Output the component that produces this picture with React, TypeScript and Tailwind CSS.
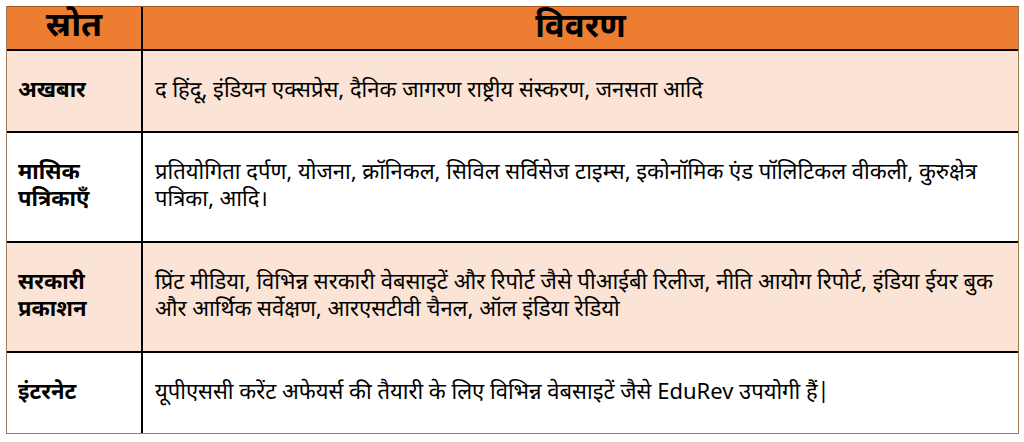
const font = { fontFamily: '"Noto Sans Devanagari", "Nirmala UI", "Mangal", "Noto Sans", sans-serif' };

const rows: { source: string[]; lines: string[]; h: string; bg: string }[] = [
  {
    source: ['अखबार'],
    lines: ['द हिंदू, इंडियन एक्सप्रेस, दैनिक जागरण राष्ट्रीय संस्करण, जनसता आदि'],
    h: 'h-[80px]',
    bg: 'bg-[#fbe4d5]',
  },
  {
    source: ['मासिक', 'पत्रिकाएँ'],
    lines: [
      'प्रतियोगिता दर्पण, योजना, क्रॉनिकल, सिविल सर्विसेज टाइम्स, इकोनॉमिक एंड पॉलिटिकल वीकली, कुरुक्षेत्र',
      'पत्रिका, आदि।',
    ],
    h: 'h-[108px]',
    bg: 'bg-white',
  },
  {
    source: ['सरकारी', 'प्रकाशन'],
    lines: [
      'प्रिंट मीडिया, विभिन्न सरकारी वेबसाइटें और रिपोर्ट जैसे पीआईबी रिलीज, नीति आयोग रिपोर्ट, इंडिया ईयर बुक',
      'और आर्थिक सर्वेक्षण, आरएसटीवी चैनल, ऑल इंडिया रेडियो',
    ],
    h: 'h-[108px]',
    bg: 'bg-[#fbe4d5]',
  },
  {
    source: ['इंटरनेट'],
    lines: ['यूपीएससी करेंट अफेयर्स की तैयारी के लिए विभिन्न वेबसाइटें जैसे EduRev उपयोगी हैं|'],
    h: 'h-[80px]',
    bg: 'bg-white',
  },
];

export default function App() {
  return (
    <div className="w-[1024px] h-[442px] bg-white pt-[6px] pl-[6px] text-black" style={font}>
      <div className="w-[1013px] border border-[#9b7b52] border-t-[#a8521c]">
        {/* header */}
        <div className="flex h-[44px] bg-[#ed7d31] border-b-2 border-black">
          <div className="w-[136px] border-r-2 border-black flex items-center justify-center text-[34px] font-bold leading-none">
            स्रोत
          </div>
          <div className="flex-1 flex items-center justify-center text-[33px] font-bold leading-none">
            विवरण
          </div>
        </div>

        {rows.map((r, i) => (
          <div
            key={i}
            className={`flex ${r.h} ${r.bg} ${i < rows.length - 1 ? 'border-b-2 border-black box-content' : ''}`}
          >
            <div className="w-[136px] border-r-2 border-black flex flex-col justify-center pl-[11px] text-[22px] font-bold leading-[27px]">
              {r.source.map((s) => (
                <span key={s}>{s}</span>
              ))}
            </div>
            <div className="flex-1 flex flex-col justify-center pl-[12px] text-[22px] leading-[27px]">
              {r.lines.map((l) => (
                <span key={l} className="whitespace-nowrap">
                  {l}
                </span>
              ))}
            </div>
          </div>
        ))}
      </div>
    </div>
  );
}
